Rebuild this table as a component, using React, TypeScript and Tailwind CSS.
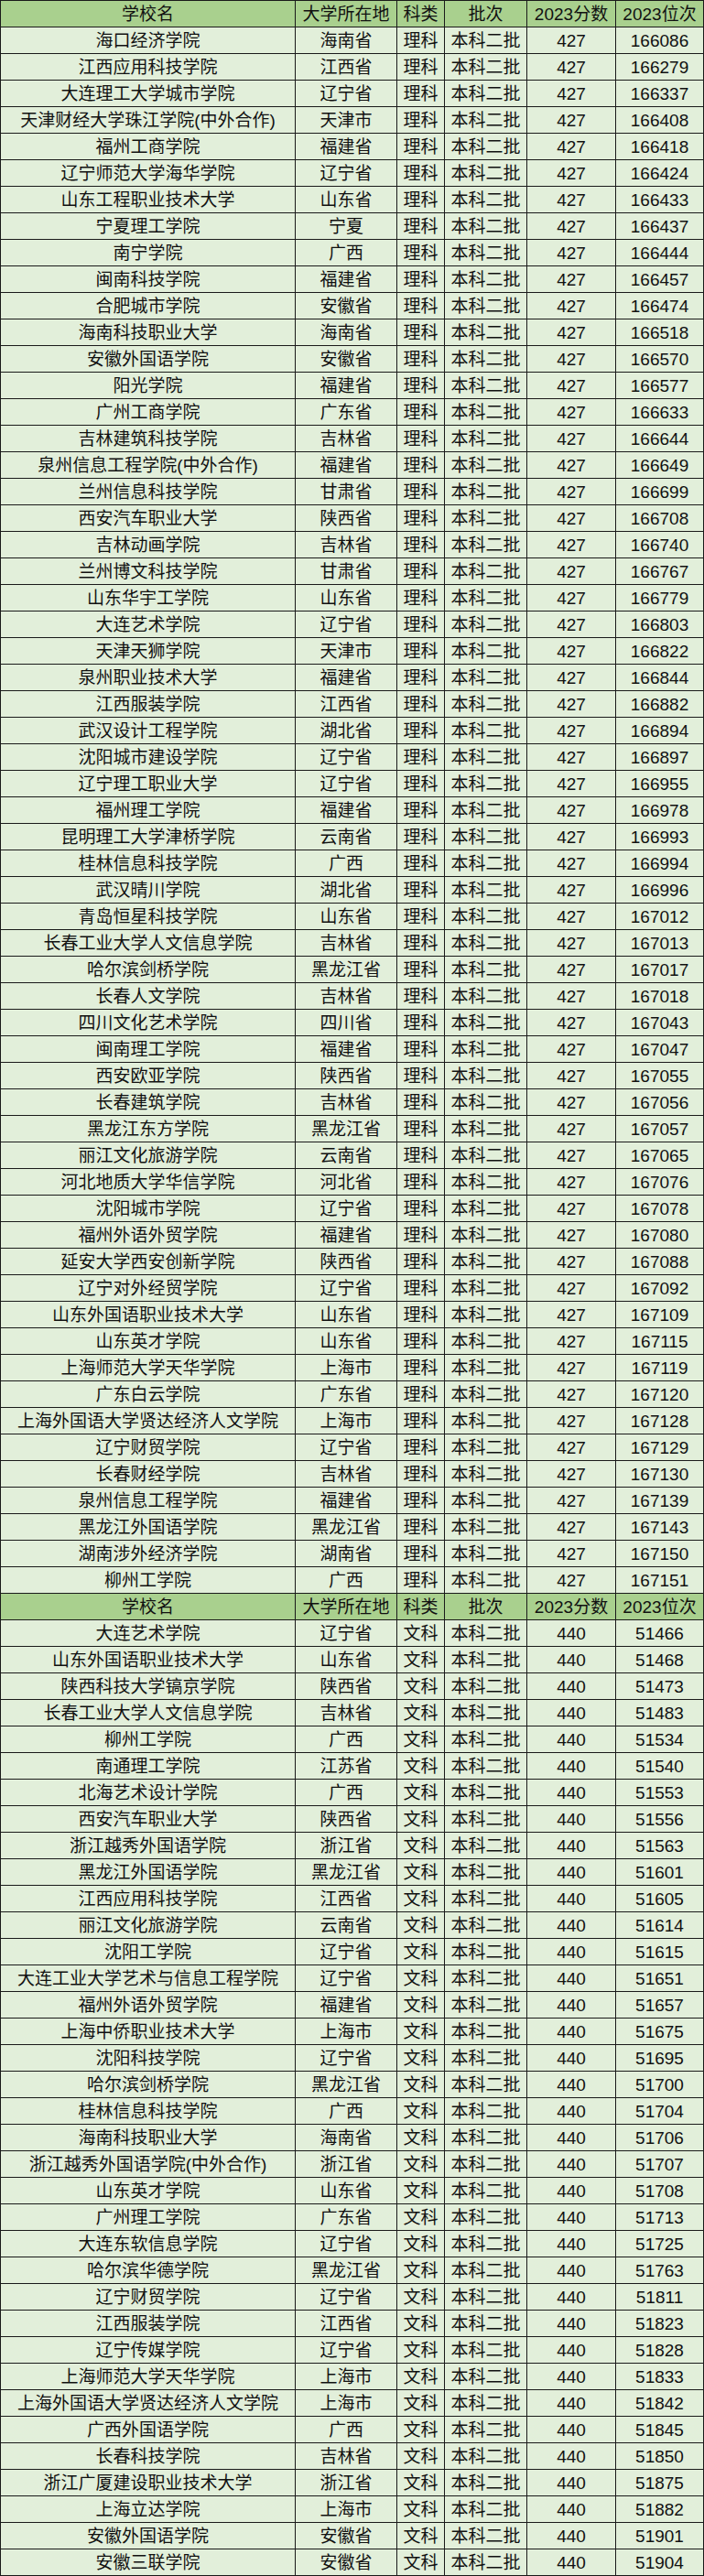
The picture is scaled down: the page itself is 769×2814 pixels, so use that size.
type Row = [string, string, string];

// [学校名, 所在地, 位次] — 分数/科类/批次 per section
const science: Row[] = [
  ["海口经济学院", "海南省", "166086"],
  ["江西应用科技学院", "江西省", "166279"],
  ["大连理工大学城市学院", "辽宁省", "166337"],
  ["天津财经大学珠江学院(中外合作)", "天津市", "166408"],
  ["福州工商学院", "福建省", "166418"],
  ["辽宁师范大学海华学院", "辽宁省", "166424"],
  ["山东工程职业技术大学", "山东省", "166433"],
  ["宁夏理工学院", "宁夏", "166437"],
  ["南宁学院", "广西", "166444"],
  ["闽南科技学院", "福建省", "166457"],
  ["合肥城市学院", "安徽省", "166474"],
  ["海南科技职业大学", "海南省", "166518"],
  ["安徽外国语学院", "安徽省", "166570"],
  ["阳光学院", "福建省", "166577"],
  ["广州工商学院", "广东省", "166633"],
  ["吉林建筑科技学院", "吉林省", "166644"],
  ["泉州信息工程学院(中外合作)", "福建省", "166649"],
  ["兰州信息科技学院", "甘肃省", "166699"],
  ["西安汽车职业大学", "陕西省", "166708"],
  ["吉林动画学院", "吉林省", "166740"],
  ["兰州博文科技学院", "甘肃省", "166767"],
  ["山东华宇工学院", "山东省", "166779"],
  ["大连艺术学院", "辽宁省", "166803"],
  ["天津天狮学院", "天津市", "166822"],
  ["泉州职业技术大学", "福建省", "166844"],
  ["江西服装学院", "江西省", "166882"],
  ["武汉设计工程学院", "湖北省", "166894"],
  ["沈阳城市建设学院", "辽宁省", "166897"],
  ["辽宁理工职业大学", "辽宁省", "166955"],
  ["福州理工学院", "福建省", "166978"],
  ["昆明理工大学津桥学院", "云南省", "166993"],
  ["桂林信息科技学院", "广西", "166994"],
  ["武汉晴川学院", "湖北省", "166996"],
  ["青岛恒星科技学院", "山东省", "167012"],
  ["长春工业大学人文信息学院", "吉林省", "167013"],
  ["哈尔滨剑桥学院", "黑龙江省", "167017"],
  ["长春人文学院", "吉林省", "167018"],
  ["四川文化艺术学院", "四川省", "167043"],
  ["闽南理工学院", "福建省", "167047"],
  ["西安欧亚学院", "陕西省", "167055"],
  ["长春建筑学院", "吉林省", "167056"],
  ["黑龙江东方学院", "黑龙江省", "167057"],
  ["丽江文化旅游学院", "云南省", "167065"],
  ["河北地质大学华信学院", "河北省", "167076"],
  ["沈阳城市学院", "辽宁省", "167078"],
  ["福州外语外贸学院", "福建省", "167080"],
  ["延安大学西安创新学院", "陕西省", "167088"],
  ["辽宁对外经贸学院", "辽宁省", "167092"],
  ["山东外国语职业技术大学", "山东省", "167109"],
  ["山东英才学院", "山东省", "167115"],
  ["上海师范大学天华学院", "上海市", "167119"],
  ["广东白云学院", "广东省", "167120"],
  ["上海外国语大学贤达经济人文学院", "上海市", "167128"],
  ["辽宁财贸学院", "辽宁省", "167129"],
  ["长春财经学院", "吉林省", "167130"],
  ["泉州信息工程学院", "福建省", "167139"],
  ["黑龙江外国语学院", "黑龙江省", "167143"],
  ["湖南涉外经济学院", "湖南省", "167150"],
  ["柳州工学院", "广西", "167151"],
];

const arts: Row[] = [
  ["大连艺术学院", "辽宁省", "51466"],
  ["山东外国语职业技术大学", "山东省", "51468"],
  ["陕西科技大学镐京学院", "陕西省", "51473"],
  ["长春工业大学人文信息学院", "吉林省", "51483"],
  ["柳州工学院", "广西", "51534"],
  ["南通理工学院", "江苏省", "51540"],
  ["北海艺术设计学院", "广西", "51553"],
  ["西安汽车职业大学", "陕西省", "51556"],
  ["浙江越秀外国语学院", "浙江省", "51563"],
  ["黑龙江外国语学院", "黑龙江省", "51601"],
  ["江西应用科技学院", "江西省", "51605"],
  ["丽江文化旅游学院", "云南省", "51614"],
  ["沈阳工学院", "辽宁省", "51615"],
  ["大连工业大学艺术与信息工程学院", "辽宁省", "51651"],
  ["福州外语外贸学院", "福建省", "51657"],
  ["上海中侨职业技术大学", "上海市", "51675"],
  ["沈阳科技学院", "辽宁省", "51695"],
  ["哈尔滨剑桥学院", "黑龙江省", "51700"],
  ["桂林信息科技学院", "广西", "51704"],
  ["海南科技职业大学", "海南省", "51706"],
  ["浙江越秀外国语学院(中外合作)", "浙江省", "51707"],
  ["山东英才学院", "山东省", "51708"],
  ["广州理工学院", "广东省", "51713"],
  ["大连东软信息学院", "辽宁省", "51725"],
  ["哈尔滨华德学院", "黑龙江省", "51763"],
  ["辽宁财贸学院", "辽宁省", "51811"],
  ["江西服装学院", "江西省", "51823"],
  ["辽宁传媒学院", "辽宁省", "51828"],
  ["上海师范大学天华学院", "上海市", "51833"],
  ["上海外国语大学贤达经济人文学院", "上海市", "51842"],
  ["广西外国语学院", "广西", "51845"],
  ["长春科技学院", "吉林省", "51850"],
  ["浙江广厦建设职业技术大学", "浙江省", "51875"],
  ["上海立达学院", "上海市", "51882"],
  ["安徽外国语学院", "安徽省", "51901"],
  ["安徽三联学院", "安徽省", "51904"],
];

const headers = ["学校名", "大学所在地", "科类", "批次", "2023分数", "2023位次"];
const widths = ["w-[322px]", "w-[111px]", "w-[52px]", "w-[90px]", "w-[97px]", "w-[96px]"];

function Line({ cells, header }: { cells: string[]; header?: boolean }) {
  return (
    <div className={`flex h-[29px] ${header ? "bg-[#a9d08e]" : "bg-[#e2efda]"}`}>
      {cells.map((c, i) => (
        <div
          key={i}
          className={`${widths[i]} shrink-0 h-full flex items-center justify-center border-r border-b border-[#1a1a1a] whitespace-nowrap overflow-hidden`}
        >
          {c}
        </div>
      ))}
    </div>
  );
}

function Section({ rows, kind, score }: { rows: Row[]; kind: string; score: string }) {
  return (
    <>
      <Line cells={headers} header />
      {rows.map((r, i) => (
        <Line key={i} cells={[r[0], r[1], kind, "本科二批", score, r[2]]} />
      ))}
    </>
  );
}

export default function App() {
  return (
    <div
      className="w-[769px] border-l border-t border-[#1a1a1a] text-[19px] leading-none text-[#111]"
      style={{ fontFamily: '"Liberation Sans", "Noto Sans CJK SC", sans-serif' }}
    >
      <Section rows={science} kind="理科" score="427" />
      <Section rows={arts} kind="文科" score="440" />
    </div>
  );
}
